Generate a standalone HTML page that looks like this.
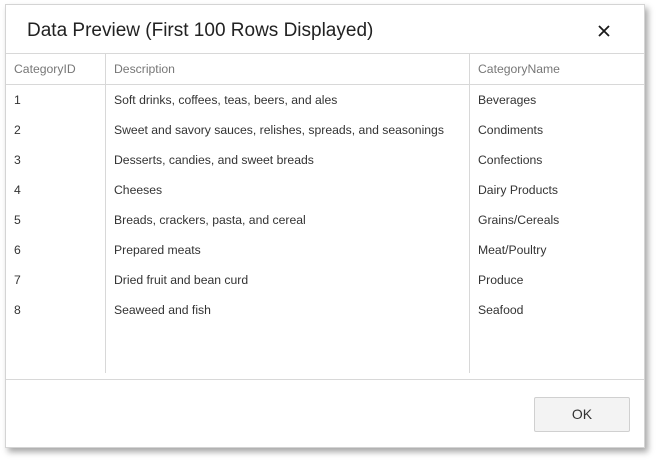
<!DOCTYPE html>
<html><head><meta charset="utf-8"><style>
*{margin:0;padding:0;box-sizing:border-box}
body{width:657px;height:461px;background:#fff;font-family:"Liberation Sans",sans-serif;position:relative;overflow:hidden}
.dlg{position:absolute;left:5px;top:4px;width:640px;height:444px;background:#fff;border:1px solid #d4d4d4;box-shadow:3px 4px 6px rgba(0,0,0,0.35)}
.title{position:absolute;left:21px;top:15px;font-size:19.2px;color:#222;font-family:"Liberation Sans",sans-serif;font-weight:normal}
.x{position:absolute;left:592px;top:20px}
.hl{position:absolute;left:0;width:638px;height:1px;background:#d8d8d8}
.vl{position:absolute;top:49px;width:1px;height:319px;background:#d8d8d8}
.t{position:absolute;font-size:12.2px;color:#333;white-space:nowrap}
.h{color:#777}
.ok{position:absolute;left:528px;top:392px;width:96px;height:35px;background:#f3f3f3;border:1px solid #d0d0d0;border-radius:2px;font-size:14px;color:#333;text-align:center;line-height:33px}
</style></head><body>
<div class="dlg">
<div class="title" style="font-size:19px">Data Preview (First 100 Rows Displayed)</div>
<svg class="x" width="12" height="12" viewBox="0 0 12 12"><path d="M1 1L11 11M11 1L1 11" stroke="#1a1a1a" stroke-width="1.8"/></svg>
<div class="hl" style="top:48px"></div>
<div class="hl" style="top:79px"></div>
<div class="vl" style="left:99px"></div>
<div class="vl" style="left:463px"></div>
<div class="hl" style="top:374px"></div>
<div class="t h" style="left:8px;top:57px">CategoryID</div>
<div class="t h" style="left:108px;top:57px">Description</div>
<div class="t h" style="left:472px;top:57px">CategoryName</div>

<div class="t" style="left:8px;top:88px">1</div><div class="t" style="left:108px;top:88px">Soft drinks, coffees, teas, beers, and ales</div><div class="t" style="left:472px;top:88px">Beverages</div>
<div class="t" style="left:8px;top:118px">2</div><div class="t" style="left:108px;top:118px">Sweet and savory sauces, relishes, spreads, and seasonings</div><div class="t" style="left:472px;top:118px">Condiments</div>
<div class="t" style="left:8px;top:148px">3</div><div class="t" style="left:108px;top:148px">Desserts, candies, and sweet breads</div><div class="t" style="left:472px;top:148px">Confections</div>
<div class="t" style="left:8px;top:178px">4</div><div class="t" style="left:108px;top:178px">Cheeses</div><div class="t" style="left:472px;top:178px">Dairy Products</div>
<div class="t" style="left:8px;top:208px">5</div><div class="t" style="left:108px;top:208px">Breads, crackers, pasta, and cereal</div><div class="t" style="left:472px;top:208px">Grains/Cereals</div>
<div class="t" style="left:8px;top:238px">6</div><div class="t" style="left:108px;top:238px">Prepared meats</div><div class="t" style="left:472px;top:238px">Meat/Poultry</div>
<div class="t" style="left:8px;top:268px">7</div><div class="t" style="left:108px;top:268px">Dried fruit and bean curd</div><div class="t" style="left:472px;top:268px">Produce</div>
<div class="t" style="left:8px;top:298px">8</div><div class="t" style="left:108px;top:298px">Seaweed and fish</div><div class="t" style="left:472px;top:298px">Seafood</div>

<div class="ok">OK</div>
</div>
</body></html>
